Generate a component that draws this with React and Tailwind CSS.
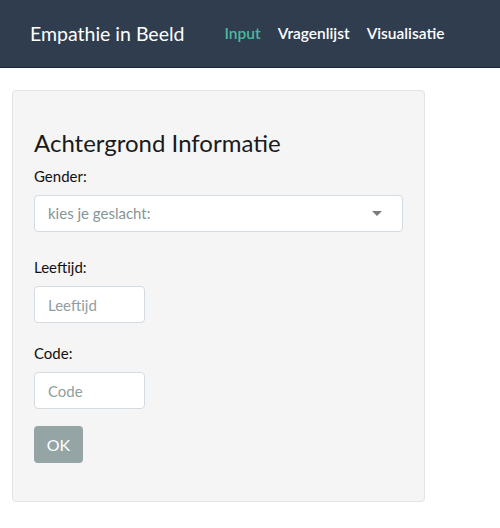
import React from 'react'

const font = { fontFamily: 'Lato, "Open Sans", sans-serif' }

function NavBar() {
  return (
    <nav className="h-[68px] bg-[#2f3d4f] border-b border-[#1c2836] flex items-center pl-[30px]">
      <span className="text-white text-[19.5px] leading-none mr-[40px]">Empathie in Beeld</span>
      <ul className="flex items-center gap-[17px] text-[15.5px] font-semibold leading-none">
        <li className="text-[#4cb89d]">Input</li>
        <li className="text-white">Vragenlijst</li>
        <li className="text-white">Visualisatie</li>
      </ul>
    </nav>
  )
}

function Label({ children, className = '' }) {
  return <label className={`block text-[15px] leading-[21px] text-[#111] mb-[8px] ${className}`}>{children}</label>
}

export default function App() {
  return (
    <div className="w-[500px] min-h-[528px] bg-white" style={font}>
      <NavBar />

      <div className="px-[12px] pt-[22px]">
        <div className="w-[413px] bg-[#f5f5f5] border border-[#e3e3e3] rounded-[4px] px-[21px] pt-[37px] pb-[38px]">
          <h3 className="text-[24px] leading-[29px] text-[#1a1a1a] mb-[9px]">Achtergrond Informatie</h3>

          <Label>Gender:</Label>
          <div className="h-[37px] w-full bg-white border border-[#d3dae0] rounded-[4px] flex items-center justify-between pl-[13px] pr-[20px]">
            <span className="text-[15px] text-[#869596]">kies je geslacht:</span>
            <span className="w-0 h-0 border-l-[5px] border-r-[5px] border-t-[5px] border-l-transparent border-r-transparent border-t-[#7a7a7a]" />
          </div>

          <Label className="mt-[25px]">Leeftijd:</Label>
          <input
            placeholder="Leeftijd"
            className="block h-[37px] w-[111px] bg-white border border-[#d3dae0] rounded-[4px] px-[13px] text-[15px] placeholder:text-[#8f9e9f] outline-none"
            style={font}
          />

          <Label className="mt-[20px]">Code:</Label>
          <input
            placeholder="Code"
            className="block h-[37px] w-[111px] bg-white border border-[#d3dae0] rounded-[4px] px-[13px] text-[15px] placeholder:text-[#8f9e9f] outline-none"
            style={font}
          />

          <button
            className="mt-[17px] h-[37px] w-[49px] bg-[#95a5a6] rounded-[4px] text-white text-[16px] flex items-center justify-center"
            style={font}
          >
            OK
          </button>
        </div>
      </div>
    </div>
  )
}
